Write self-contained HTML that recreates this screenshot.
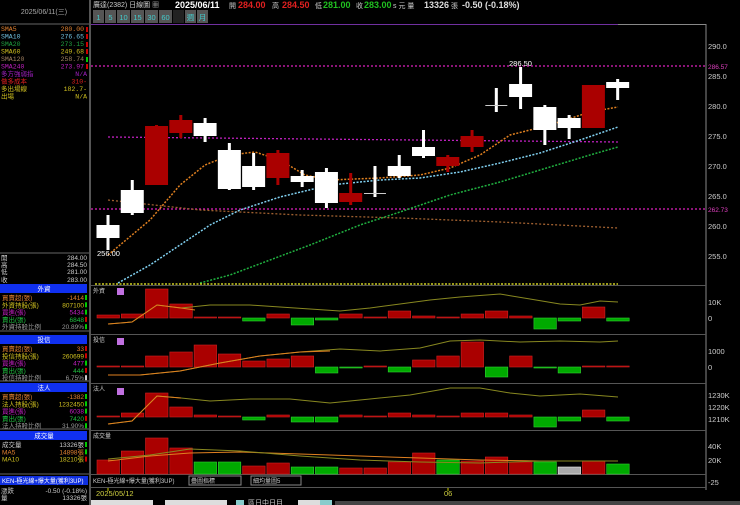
<!DOCTYPE html>
<html><head><meta charset="utf-8"><style>
body{margin:0;background:#000;width:740px;height:505px;overflow:hidden;font-family:"Liberation Sans","Noto Sans CJK TC",sans-serif;}
svg{position:absolute;left:0;top:0}
</style></head><body>
<svg id="s" width="740" height="505" xmlns="http://www.w3.org/2000/svg" font-family="Liberation Sans, Noto Sans CJK TC, sans-serif">
<rect width="740" height="505" fill="#000"/>
<!-- left panel -->
<text x="44" y="14" fill="#aaa" font-size="7" text-anchor="middle">2025/06/11(三)</text>
<line x1="0" y1="24" x2="89" y2="24" stroke="#666"/>
<g font-size="6.5" font-family="Liberation Mono, Noto Sans CJK TC, monospace">
<text x="1" y="31" fill="#e08030">SMA5</text><text x="84" y="31" fill="#e08030" text-anchor="end">280.00</text>
<text x="1" y="38.5" fill="#70c0e0">SMA10</text><text x="84" y="38.5" fill="#70c0e0" text-anchor="end">276.65</text>
<text x="1" y="46" fill="#20a040">SMA20</text><text x="84" y="46" fill="#20a040" text-anchor="end">273.15</text>
<text x="1" y="53.5" fill="#d0c020">SMA60</text><text x="84" y="53.5" fill="#d0c020" text-anchor="end">249.68</text>
<text x="1" y="61" fill="#a08060">SMA120</text><text x="84" y="61" fill="#a08060" text-anchor="end">258.74</text>
<text x="1" y="68.5" fill="#c020c0">SMA240</text><text x="84" y="68.5" fill="#c020c0" text-anchor="end">273.97</text>
<text x="1" y="76" fill="#a020c0">多方強弱指</text><text x="87" y="76" fill="#a020c0" text-anchor="end">N/A</text>
<text x="1" y="83.5" fill="#e02020">做多成本</text><text x="87" y="83.5" fill="#e02020" text-anchor="end">310-</text>
<text x="1" y="91" fill="#d0c020">多出場線</text><text x="87" y="91" fill="#d0c020" text-anchor="end">182.7-</text>
<text x="1" y="98.5" fill="#d0c020">出場</text><text x="87" y="98.5" fill="#d0c020" text-anchor="end">N/A</text>
</g>
<g fill="#c00"><rect x="86" y="27" width="2" height="5"/><rect x="86" y="34" width="2" height="5"/><rect x="86" y="42" width="2" height="5"/><rect x="86" y="49" width="2" height="5"/><rect x="86" y="64" width="2" height="5"/></g>
<rect x="86" y="57" width="2" height="5" fill="#0c0"/>
<line x1="0" y1="253" x2="89" y2="253" stroke="#666"/>
<g font-size="6.5" fill="#ccc"><text x="1" y="260">開</text><text x="87" y="260" text-anchor="end">284.00</text>
<text x="1" y="267">高</text><text x="87" y="267" text-anchor="end">284.50</text>
<text x="1" y="274">低</text><text x="87" y="274" text-anchor="end">281.00</text>
<text x="1" y="282">收</text><text x="87" y="282" text-anchor="end">283.00</text></g>
<g id="lp"></g>
<rect x="0" y="476" width="88" height="9" fill="#1030e0"/>
<text x="2" y="483" fill="#fff" font-size="6">KEN-極光線+爆大量(獲利3UP)</text>
<g font-size="6.5" fill="#ccc"><text x="1" y="493">漲跌</text><text x="87" y="493" text-anchor="end">-0.50 (-0.18%)</text>
<text x="1" y="500">量</text><text x="87" y="500" text-anchor="end">13326張</text></g>
<line x1="90" y1="0" x2="90" y2="505" stroke="#555" stroke-width="2"/>
<!-- header -->
<text x="93" y="7" font-size="7" fill="#ccc">廣達(2382)    日線圖  ▦</text>
<text x="175" y="8" font-size="9" font-weight="bold" fill="#fff">2025/06/11</text>
<text x="229" y="8" font-size="7" fill="#ccc">開</text><text x="238" y="8" font-size="9" font-weight="bold" fill="#e02020">284.00</text>
<text x="272" y="8" font-size="7" fill="#ccc">高</text><text x="282" y="8" font-size="9" font-weight="bold" fill="#e02020">284.50</text>
<text x="315" y="8" font-size="7" fill="#ccc">低</text><text x="323" y="8" font-size="9" font-weight="bold" fill="#20c020">281.00</text>
<text x="356" y="8" font-size="7" fill="#ccc">收</text><text x="364" y="8" font-size="9" font-weight="bold" fill="#20c020">283.00</text>
<text x="393" y="8" font-size="7" fill="#ccc">s 元  量</text><text x="424" y="8" font-size="9" font-weight="bold" fill="#ddd">13326</text>
<text x="451" y="8" font-size="7" fill="#ccc">張</text><text x="462" y="8" font-size="9" font-weight="bold" fill="#ddd">-0.50 (-0.18%)</text>
<g id="tb"></g>
<line x1="91" y1="24.5" x2="618" y2="24.5" stroke="#7030a0"/>
<line x1="618" y1="24.5" x2="706" y2="24.5" stroke="#888"/>
<line x1="706" y1="24" x2="706" y2="490" stroke="#888"/>
<g font-size="7.5" fill="#ccc"><text x="708" y="49">290.0</text><text x="708" y="79">285.0</text><text x="708" y="109">280.0</text><text x="708" y="139">275.0</text><text x="708" y="169">270.0</text><text x="708" y="199">265.0</text><text x="708" y="229">260.0</text><text x="708" y="259">255.0</text></g>
<text x="708" y="69" font-size="6.5" fill="#e040c0">286.57</text>
<text x="708" y="212" font-size="6.5" fill="#e040c0">262.73</text>
<line x1="91" y1="66" x2="706" y2="66" stroke="#e020c0" stroke-dasharray="2,2" stroke-width="1.3"/>
<line x1="91" y1="209" x2="706" y2="209" stroke="#e020c0" stroke-dasharray="2,2" stroke-width="1.3"/>
<line x1="108" y1="137" x2="618" y2="142" stroke="#c020c0" stroke-dasharray="2,2" stroke-width="1.3"/>
<polyline points="108,200 200,210 300,215 400,218 500,222 618,228" fill="none" stroke="#a06030" stroke-dasharray="2,2" stroke-width="1.3"/>
<polyline points="108,255 150,220 180,185 205,165 230,155 255,152 280,160 305,175 330,180 380,178 420,175 450,168 480,155 510,135 550,125 590,112 618,107" fill="none" stroke="#e08020" stroke-dasharray="2,1.5" stroke-width="1.5"/>
<polyline points="118,283 150,265 180,245 210,225 240,210 280,197 330,185 380,180 420,178 460,172 500,163 540,153 580,140 618,127" fill="none" stroke="#80d0f0" stroke-dasharray="2,1.5" stroke-width="1.5"/>
<polyline points="200,283 230,275 270,260 310,245 360,225 400,212 450,195 500,182 550,167 590,155 618,147" fill="none" stroke="#20b040" stroke-dasharray="2,1.5" stroke-width="1.5"/>
<line x1="95" y1="284" x2="618" y2="284" stroke="#d0d020" stroke-dasharray="2,1.5" stroke-width="1.5"/>
<g id="cd"></g>
<text x="97" y="256" font-size="7.5" fill="#fff">256.00</text>
<text x="509" y="66" font-size="7.5" fill="#fff">286.50</text>
<!-- panels -->
<g stroke="#555"><line x1="91" y1="285.5" x2="706" y2="285.5"/><line x1="91" y1="334.5" x2="706" y2="334.5"/><line x1="91" y1="383.5" x2="706" y2="383.5"/><line x1="91" y1="430.5" x2="706" y2="430.5"/><line x1="91" y1="474.5" x2="706" y2="474.5"/><line x1="91" y1="487.5" x2="706" y2="487.5"/></g>
<g id="pn"></g>
<g font-size="7.5" fill="#ccc"><text x="708" y="305">10K</text><text x="708" y="321">0</text><text x="708" y="354">1000</text><text x="708" y="370">0</text><text x="708" y="398">1230K</text><text x="708" y="410">1220K</text><text x="708" y="422">1210K</text><text x="708" y="449">40K</text><text x="708" y="463">20K</text><text x="708" y="485">-25</text></g>
<g font-size="6" fill="#ccc"><text x="93" y="293">外資</text><text x="93" y="342">投信</text><text x="93" y="391">法人</text><text x="93" y="438">成交量</text></g>
<g fill="#c070e0"><rect x="117" y="288" width="7" height="7"/><rect x="117" y="338" width="7" height="7"/><rect x="117" y="388" width="7" height="7"/></g>
<text x="93" y="483" font-size="6" fill="#ccc">KEN-極光線+爆大量(獲利3UP)</text>
<rect x="189" y="476" width="52" height="9" fill="none" stroke="#888"/><text x="191" y="483" font-size="6" fill="#ccc">疊圖指標</text>
<rect x="251" y="476" width="50" height="9" fill="none" stroke="#888"/><text x="253" y="483" font-size="6" fill="#ccc">細均量圖5</text>
<line x1="108" y1="488" x2="108" y2="491" stroke="#cc0"/><line x1="448" y1="488" x2="448" y2="491" stroke="#cc0"/>
<text x="96" y="496" font-size="7.5" fill="#d0d040">2025/05/12</text>
<text x="444" y="496" font-size="7.5" fill="#d0d040">06</text>
<rect x="91" y="500" width="62" height="6" fill="#ddd"/><rect x="165" y="500" width="62" height="6" fill="#ddd"/>
<rect x="236" y="500" width="8" height="6" fill="#8cc"/><text x="248" y="505" font-size="7" fill="#ccc">區日中日目</text>
<rect x="298" y="500" width="22" height="6" fill="#ddd"/><rect x="320" y="500" width="12" height="6" fill="#8cc"/>
<rect x="335" y="501" width="405" height="4" fill="#444"/>
</svg>
<script>
var s='';
// toolbar
var bt=['1','5','10','15','30','60','','週','月'],bx=93;
bt.forEach(function(t,i){var w=t.length>1?13:11;s+='<rect x="'+bx+'" y="10" width="'+w+'" height="13" fill="'+(i==6?'#222':'#555')+'"/><text x="'+(bx+w/2)+'" y="20" font-size="7.5" fill="#4cc" text-anchor="middle">'+t+'</text>';bx+=w+1;});
document.getElementById('tb').innerHTML=s;
// candles [type, bodyTop, bodyBot, wickTop, wickBot]
var C=[['w',225,238,215,250],['w',190,213,180,215],['r',126,185,125,185],['r',120,133,115,138],['w',123,136,118,142],['w',150,189,143,190],['w',166,187,153,190],['r',153,178,150,185],['w',176,182,170,187],['w',172,203,168,208],['r',193,202,173,205],['w',193,194,166,197],['w',166,176,155,178],['w',147,156,130,158],['r',157,166,155,172],['r',136,147,130,152],['w',105,106,88,112],['w',84,97,67,109],['w',107,130,105,145],['w',118,128,115,139],['r',85,128,85,128],['w',82,88,79,100]];
s='';
C.forEach(function(c,i){var x=108+24.27*i,col=c[0]=='w'?'#fff':'#a00';
s+='<rect x="'+(x-1.5)+'" y="'+c[3]+'" width="3" height="'+(c[4]-c[3])+'" fill="'+col+'"/>';
var h=c[2]-c[1];if(h<2){s+='<rect x="'+(x-11)+'" y="'+c[1]+'" width="22" height="1" fill="#ccc"/>';}
else s+='<rect x="'+(x-11.5)+'" y="'+c[1]+'" width="23" height="'+h+'" fill="'+col+'"/>';});
document.getElementById('cd').innerHTML=s;
// panels
s='';
function bars(z,v,col){v.forEach(function(t,i){var x=97+24.27*i;var top=Math.min(t,z),h=Math.max(1,Math.abs(t-z));var c=col?col[i]:(t>z?'#0a0':'#a00');if(t>z)c='#0a0';s+='<rect x="'+x.toFixed(1)+'" y="'+top+'" width="22.5" height="'+h+'" fill="'+c+'" stroke="'+(c=='#0a0'?'#3c3':'#c22')+'" stroke-width="0.6"/>';});}
bars(318,[315,314,289,304,317,317,321,314,325,320,314,317,311,316,317,314,311,316,329,321,307,321]);
bars(367,[366,366,356,352,345,354,361,359,356,373,368,366,372,360,356,342,377,356,368,373,366,366]);
bars(417,[416,413,393,407,415,416,420,415,422,422,415,416,413,415,416,413,413,415,427,421,410,421]);
var vc='rrrrggrrggrrrrgrrrgxrg',vt=[460,451,438,448,462,462,466,463,467,467,468,468,462,453,460,461,457,462,462,467,461,464];
vt.forEach(function(t,i){var x=97+24.27*i,k=vc[i];var c=k=='r'?'#a00':k=='g'?'#0a0':'#aaa';s+='<rect x="'+x.toFixed(1)+'" y="'+t+'" width="22.5" height="'+(474-t)+'" fill="'+c+'" stroke="'+(k=='r'?'#c22':k=='g'?'#3c3':'#eee')+'" stroke-width="0.6"/>';});
function pl(p,c){s+='<polyline points="'+p+'" fill="none" stroke="'+c+'" stroke-width="1"/>';}
pl('108,324 132,322 157,305 181,308 210,305 250,305 280,307 310,309 340,311 370,308 400,304 430,300 460,297 500,294 530,299 560,304 580,305 600,301 618,302','#888820');
pl('108,324 132,322 157,305 181,308 195,310','#e08020');
pl('108,375 140,375 180,371 220,363 260,356 300,352 340,349 380,351 420,348 450,341 480,340 520,342 560,341 600,342 618,341','#888820');
pl('108,375 140,375 180,371 220,363 260,356 300,352 330,351','#e08020');
pl('108,424 132,421 157,396 181,398 210,401 250,399 290,399 330,403 370,399 410,395 450,388 480,388 510,393 540,396 580,394 618,397','#888820');
pl('108,424 132,421 157,396 181,398','#e08020');
pl('108,461 150,456 190,453 240,452 300,454 360,456 420,458 480,460 540,461 618,461','#e08020');
pl('108,459 150,455 190,449 240,451 300,456 360,460 420,462 480,463 540,461 618,461','#888820');
document.getElementById('pn').innerHTML=s;
// left panel sections
s='';
function sec(y,title,rows){s+='<rect x="0" y="'+y+'" width="87" height="9" fill="#1030f0"/><text x="44" y="'+(y+7)+'" font-size="6.5" fill="#fff" text-anchor="middle">'+title+'</text>';
rows.forEach(function(r,i){var yy=y+16+i*7.3;s+='<text x="2" y="'+yy+'" font-size="6.5" fill="'+r[2]+'">'+r[0]+'</text><text x="84" y="'+yy+'" font-size="6.5" fill="'+r[2]+'" text-anchor="end">'+r[1]+'</text><rect x="85" y="'+(yy-5)+'" width="2" height="5" fill="'+r[3]+'"/>';});}
sec(284,'外資',[['買賣超(張)','-1414','#e08030','#0c0'],['外資持股(張)','807100','#d0c020','#0c0'],['買進(張)','5434','#c020c0','#0c0'],['賣出(張)','6848','#20c040','#c00'],['外資持股比例','20.89%','#999','#0c0']]);
s+='<line x1="0" y1="331" x2="89" y2="331" stroke="#666"/>';
sec(335,'投信',[['買賣超(張)','33','#e08030','#c00'],['投信持股(張)','260699','#d0c020','#c00'],['買進(張)','477','#c020c0','#0c0'],['賣出(張)','444','#20c040','#c00'],['投信持股比例','6.75%','#999','#ccc']]);
s+='<line x1="0" y1="381" x2="89" y2="381" stroke="#666"/>';
sec(383,'法人',[['買賣超(張)','-1382','#e08030','#0c0'],['法人持股(張)','1232450','#d0c020','#0c0'],['買進(張)','6038','#c020c0','#0c0'],['賣出(張)','7420','#20c040','#c00'],['法人持股比例','31.90%','#999','#0c0']]);
s+='<line x1="0" y1="429" x2="89" y2="429" stroke="#666"/>';
sec(431,'成交量',[['成交量','13326張','#ccc','#0c0'],['MA5','14898張','#e08030','#0c0'],['MA10','18210張','#d0c020','#c00']]);
s+='<line x1="0" y1="474" x2="89" y2="474" stroke="#666"/>';
document.getElementById('lp').innerHTML=s;
</script>
</body></html>
